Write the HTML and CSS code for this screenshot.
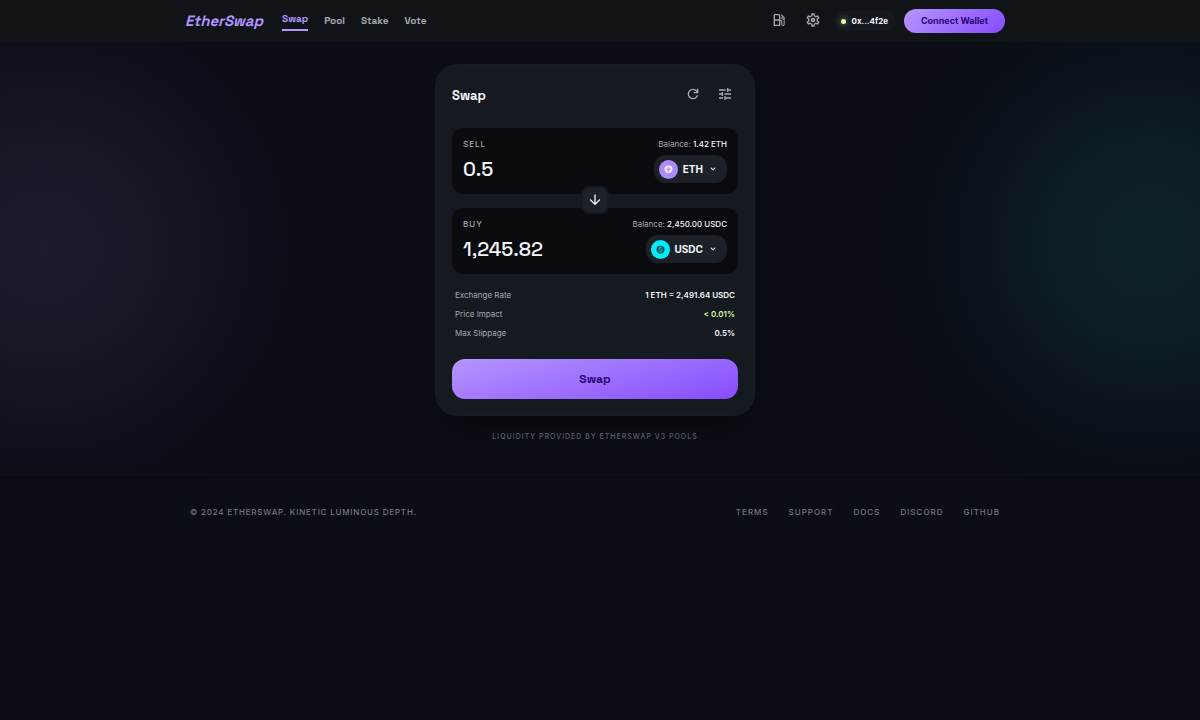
FILE: index.html
```html
<!DOCTYPE html>
<html lang="en">
<head>
<meta charset="utf-8">
<meta name="viewport" content="width=device-width, initial-scale=1">
<title>EtherSwap</title>
<link rel="stylesheet" href="styles.css">
</head>
<body>
<header class="topbar">
  <div class="topbar-inner">
    <div class="brand-group">
      <a class="brand" href="#">EtherSwap</a>
      <nav class="nav">
        <a class="nav-link active" href="#">Swap</a>
        <a class="nav-link" href="#">Pool</a>
        <a class="nav-link" href="#">Stake</a>
        <a class="nav-link" href="#">Vote</a>
      </nav>
    </div>
    <div class="account">
      <button class="icon-button raised" aria-label="Gas price">
        <svg class="icon" viewBox="0 0 24 24"><path d="M6 11h6V5H6zm-2 10V5q0-.825.588-1.412T6 3h6q.825 0 1.413.588T14 5v7h1q.825 0 1.413.588T17 14v4.5q0 .425.288.713T18 19.5t.713-.287T19 18.500v-7.200q-.225.125-.475.163T18 11.500q-1.050 0-1.775-.725T15.500 9q0-.8.438-1.437T17.100 6.650L15 4.550l1.050-1.050 3.700 3.600q.375.375.563.875T20.500 9v9.500q0 1.050-.725 1.775T18 21t-1.775-.725T15.500 18.500v-5H14V21zM18 10q.425 0 .713-.287T19 9t-.287-.712T18 8t-.712.288T17 9t.288.713T18 10M6 19h6v-6H6z"/></svg>
      </button>
      <button class="icon-button raised" aria-label="Settings">
        <svg class="icon" viewBox="0 0 24 24"><path d="M19.430 12.980c.04-.32.07-.64.07-.98s-.03-.66-.07-.98l2.110-1.650c.19-.15.24-.42.12-.64l-2-3.460a.5.5 0 0 0-.61-.22l-2.490 1c-.52-.4-1.080-.73-1.690-.98l-.38-2.650A.488.488 0 0 0 14 2h-4c-.25 0-.46.18-.49.42l-.38 2.650c-.61.25-1.170.59-1.690.98l-2.490-1a.566.566 0 0 0-.18-.03c-.17 0-.34.09-.43.25l-2 3.460c-.13.22-.07.49.12.64l2.110 1.650c-.04.32-.07.65-.07.98s.03.66.07.98l-2.110 1.650c-.19.15-.24.42-.12.64l2 3.460c.09.16.26.25.43.25.06 0 .12-.01.17-.03l2.490-1c.52.4 1.080.73 1.690.98l.38 2.650c.03.24.24.42.49.42h4c.25 0 .46-.18.49-.42l.38-2.650c.61-.25 1.170-.59 1.690-.98l2.490 1c.06.02.12.03.18.03.17 0 .34-.09.43-.25l2-3.460c.12-.22.07-.49-.12-.64l-2.110-1.650zm-1.980-1.710c.04.31.05.52.05.73 0 .21-.02.43-.05.73l-.14 1.130.89.7 1.080.84-.7 1.210-1.270-.51-1.040-.42-.9.68c-.43.32-.84.56-1.250.73l-1.060.43-.16 1.130-.2 1.350h-1.400l-.19-1.350-.16-1.130-1.060-.43c-.43-.18-.83-.41-1.230-.71l-.91-.7-1.060.43-1.270.51-.7-1.210 1.080-.84.89-.7-.14-1.130c-.03-.31-.05-.54-.05-.74s.02-.43.05-.73l.14-1.130-.89-.7-1.080-.84.7-1.210 1.270.51 1.040.42.9-.68c.43-.32.84-.56 1.250-.73l1.060-.43.16-1.130.2-1.350h1.390l.19 1.350.16 1.130 1.060.43c.43.18.83.41 1.230.71l.91.7 1.060-.43 1.270-.51.7 1.210-1.070.85-.89.7.14 1.130z"/><path fill-rule="evenodd" d="M12 8.500a3.500 3.500 0 1 0 0 7 3.500 3.500 0 0 0 0-7zm0 2.500a1 1 0 1 1 0 2 1 1 0 0 1 0-2z"/></svg>
      </button>
      <div class="address"><span class="status-dot"></span>0x...4f2e</div>
      <button class="connect">Connect Wallet</button>
    </div>
  </div>
</header>

<main class="stage">
  <div class="glow glow-violet"></div>
  <div class="glow glow-cyan"></div>
  <section class="card">
    <div class="card-head">
      <h1 class="card-title">Swap</h1>
      <div class="card-tools">
        <button class="icon-button" aria-label="Refresh">
          <svg class="icon" viewBox="0 0 24 24"><path d="M12 20q-3.350 0-5.675-2.325T4 12t2.325-5.675T12 4q1.725 0 3.300.713T18 6.750V4h2v7h-7V9h4.200q-.8-1.400-2.188-2.200T12 6Q9.500 6 7.750 7.750T6 12t1.750 4.250T12 18q1.925 0 3.475-1.100T17.650 14h2.100q-.7 2.650-2.850 4.325T12 20"/></svg>
        </button>
        <button class="icon-button" aria-label="Swap options">
          <svg class="icon" viewBox="0 0 24 24"><path d="M3 17v2h6v-2H3zM3 5v2h10V5H3zm10 16v-2h8v-2h-8v-2h-2v6h2zM7 9v2H3v2h4v2h2V9H7zm14 4v-2H11v2h10zm-6-4h2V7h4V5h-4V3h-2v6z"/></svg>
        </button>
      </div>
    </div>

    <div class="pair">
      <div class="field">
        <div class="field-row">
          <label class="field-label" for="sell">SELL</label>
          <span class="balance">Balance: <b>1.42 ETH</b></span>
        </div>
        <div class="field-row">
          <input class="amount" id="sell" type="text" inputmode="decimal" value="0.5">
          <button class="token">
            <span class="coin coin-eth"><svg class="coin-icon" viewBox="0 0 24 24"><path fill-rule="evenodd" d="M7 2h10l5 4 1 6-4 7-7 3-7-3-4-7 1-6zM7.500 6.500V9H11v1.500c-3 .2-5 .9-5 1.900s2 1.700 5 1.900V19h2v-4.700c3-.2 5-.9 5-1.900s-2-1.700-5-1.900V9h3.500V6.500z"/></svg></span>
            ETH
            <svg class="chevron" viewBox="0 0 24 24"><path d="M12 15.400l-6-6L7.400 8l4.600 4.600L16.600 8 18 9.400z"/></svg>
          </button>
        </div>
      </div>
      <button class="flip" aria-label="Switch direction">
        <svg class="icon" viewBox="0 0 24 24"><path d="M11 4v12.175l-5.600-5.600L4 12l8 8 8-8-1.400-1.425-5.600 5.600V4z"/></svg>
      </button>
      <div class="field">
        <div class="field-row">
          <label class="field-label" for="buy">BUY</label>
          <span class="balance">Balance: <b>2,450.00 USDC</b></span>
        </div>
        <div class="field-row">
          <input class="amount" id="buy" type="text" inputmode="decimal" value="1,245.82">
          <button class="token">
            <span class="coin coin-usdc"><svg class="coin-icon" viewBox="0 0 24 24"><circle cx="12" cy="12" r="11"/><path class="coin-mark" d="M15.500 9c-.5-1.400-1.800-2-3.500-2-2 0-3.300 1-3.300 2.500 0 3.400 6.800 1.600 6.800 5 0 1.500-1.400 2.500-3.500 2.500-1.900 0-3.200-.8-3.600-2.200M12 5v2m0 10v2"/></svg></span>
            USDC
            <svg class="chevron" viewBox="0 0 24 24"><path d="M12 15.400l-6-6L7.400 8l4.600 4.600L16.600 8 18 9.400z"/></svg>
          </button>
        </div>
      </div>
    </div>

    <dl class="details">
      <div class="detail"><dt>Exchange Rate</dt><dd>1 ETH = 2,491.64 USDC</dd></div>
      <div class="detail"><dt>Price Impact</dt><dd class="good">&lt; 0.01%</dd></div>
      <div class="detail"><dt>Max Slippage</dt><dd>0.5%</dd></div>
    </dl>
    <button class="submit">Swap</button>
  </section>
  <p class="caption">LIQUIDITY PROVIDED BY ETHERSWAP V3 POOLS</p>
</main>

<footer class="footer">
  <div class="footer-inner">
    <span class="copyright">© 2024 ETHERSWAP. KINETIC LUMINOUS DEPTH.</span>
    <nav class="footer-links">
      <a href="#">TERMS</a>
      <a href="#">SUPPORT</a>
      <a href="#">DOCS</a>
      <a href="#">DISCORD</a>
      <a href="#">GITHUB</a>
    </nav>
  </div>
</footer>
</body>
</html>
```
FILE: styles.css
```css
:root {
  --bg: #0a0d14;
  --card: #151a20;
  --field: #0a0b0f;
  --raised: #1c2127;
  --text: #f5f6fa;
  --muted: #a6a9af;
  --violet: #b595ff;
  --ink: #2f0073;
  --lime: #d5f5a0;
  --gutter: 10px;
  --display: "Space Grotesk", Inter, sans-serif;
}

* { box-sizing: border-box; }

body {
  margin: 0;
  min-height: 100vh;
  background: var(--bg);
  color: var(--text);
  font: 8px/12px Inter, sans-serif;
}

a { color: inherit; text-decoration: none; }

button {
  border: 0;
  padding: 0;
  background: none;
  color: inherit;
  font: inherit;
  cursor: pointer;
}

.icon { display: block; width: 16px; height: 16px; fill: currentColor; }

.icon-button { padding: 5px; color: var(--muted); }
.raised { margin-bottom: 3px; }

/* Top bar */
.topbar { padding-right: var(--gutter); background: #111417; }

.topbar-inner {
  display: flex;
  align-items: center;
  justify-content: space-between;
  max-width: 852px;
  height: 42px;
  margin: 0 auto;
  padding: 0 16px;
}

.brand-group { display: flex; align-items: center; gap: 19px; }

.brand {
  color: var(--violet);
  font: italic 700 15px/20px var(--display);
}

.nav { display: flex; align-items: center; gap: 16px; }

.nav-link { color: var(--muted); font: 600 10px/16px var(--display); }

.nav-link.active {
  padding-bottom: 2px;
  border-bottom: 2px solid var(--violet);
  color: var(--violet);
}

.account { display: flex; align-items: center; gap: 8px; }

.address {
  display: flex;
  align-items: center;
  gap: 5px;
  padding: 4px 8px 4px 7px;
  border-radius: 10px;
  background: #15191f;
  font-weight: 700;
}

.status-dot {
  width: 5px;
  height: 5px;
  border-radius: 50%;
  background: #e3ffa8;
  box-shadow: 0 0 6px rgba(213, 245, 120, .6);
}

.connect {
  padding: 6px 17px;
  border-radius: 12px;
  background: linear-gradient(135deg, #b595ff, #874cff);
  color: var(--ink);
  font-size: 9px;
  font-weight: 700;
}

/* Swap panel */
.stage {
  position: relative;
  overflow: hidden;
  padding: 22px var(--gutter) 31px 0;
}

.glow { position: absolute; border-radius: 50%; }

.glow-violet {
  top: -80px;
  left: -240px;
  width: 570px;
  height: 570px;
  background: radial-gradient(closest-side, rgba(165, 149, 255, .11), rgba(181, 149, 255, .07) 38%, rgba(181, 149, 255, .02) 72%, transparent);
}

.glow-cyan {
  top: -70px;
  right: -220px;
  width: 540px;
  height: 540px;
  background: radial-gradient(closest-side, rgba(40, 220, 220, .11), rgba(40, 220, 220, .08) 35%, rgba(40, 220, 220, .02) 70%, transparent);
}

.card {
  position: relative;
  max-width: 320px;
  margin: 0 auto;
  padding: 17px;
  border-radius: 22px;
  background: var(--card);
  box-shadow: 0 20px 24px -16px rgba(8, 8, 10, .8), inset 0 0 0 1px rgba(255, 255, 255, .015);
}

.card-head {
  display: flex;
  justify-content: space-between;
  min-height: 30px;
  margin-bottom: 17px;
}

.card-title { margin: 0; font: 700 13px/30px var(--display); }

.card-tools { display: flex; align-items: flex-start; gap: 6px; }

.pair {
  position: relative;
  display: grid;
  grid-template-columns: minmax(0, 1fr);
  gap: 14px;
}

.field {
  display: grid;
  grid-template-columns: minmax(0, 1fr);
  gap: 5px;
  padding: 10px 11px 11px;
  border-radius: 11px;
  background: var(--field);
}

.field-row {
  display: flex;
  align-items: center;
  justify-content: space-between;
}

.field-label { color: var(--muted); font-weight: 500; letter-spacing: 1px; }

.balance { color: var(--muted); }
.balance b { color: var(--text); font-weight: 500; }

.amount {
  flex: 1;
  min-width: 0;
  height: 28px;
  padding: 0;
  border: 0;
  outline: 0;
  background: none;
  color: var(--text);
  font: 500 20px/24px var(--display);
}

.token {
  display: flex;
  align-items: center;
  gap: 5px;
  height: 28px;
  padding: 0 9px 0 5px;
  border-radius: 12px;
  background: var(--raised);
  font-size: 10px;
  font-weight: 700;
}

.coin {
  display: grid;
  place-items: center;
  width: 19px;
  height: 19px;
  border-radius: 50%;
}

.coin-eth { background: #ae8bfb; color: #f4eeff; }
.coin-usdc { background: #00eefc; color: #075c63; }
.coin-icon { width: 9px; height: 9px; fill: currentColor; }
.coin-mark { fill: none; stroke: #00eefc; stroke-width: 2; }

.chevron { width: 10px; height: 10px; fill: currentColor; }

.flip {
  position: absolute;
  top: 50%;
  left: 50%;
  padding: 4px;
  border: 2px solid var(--card);
  border-radius: 8px;
  background: var(--raised);
  transform: translate(-50%, -54%);
}

.details { display: grid; gap: 7px; margin: 15px 3px 20px; }
.detail { display: flex; justify-content: space-between; }
.detail dt { color: var(--muted); }
.detail dd { margin: 0; font-weight: 600; }
.detail .good { color: var(--lime); }

.submit {
  width: 100%;
  height: 40px;
  border-radius: 13px;
  background: linear-gradient(165deg, #b595ff, #874cff);
  color: var(--ink);
  font: 700 12px/16px var(--display);
}

.caption {
  position: relative;
  margin: 15px 0 0;
  color: #5d6066;
  font-size: 7px;
  font-weight: 500;
  letter-spacing: 1px;
  text-align: center;
}

/* Footer */
.footer {
  padding-right: var(--gutter);
  border-top: 1px solid #0f1218;
  color: #74777c;
  font-weight: 500;
  letter-spacing: 1px;
}

.footer-inner {
  display: flex;
  justify-content: space-between;
  max-width: 852px;
  margin: 0 auto;
  padding: 31px 21px;
}

.copyright { letter-spacing: .1em; }

.footer-links { display: flex; gap: 20px; }
```
